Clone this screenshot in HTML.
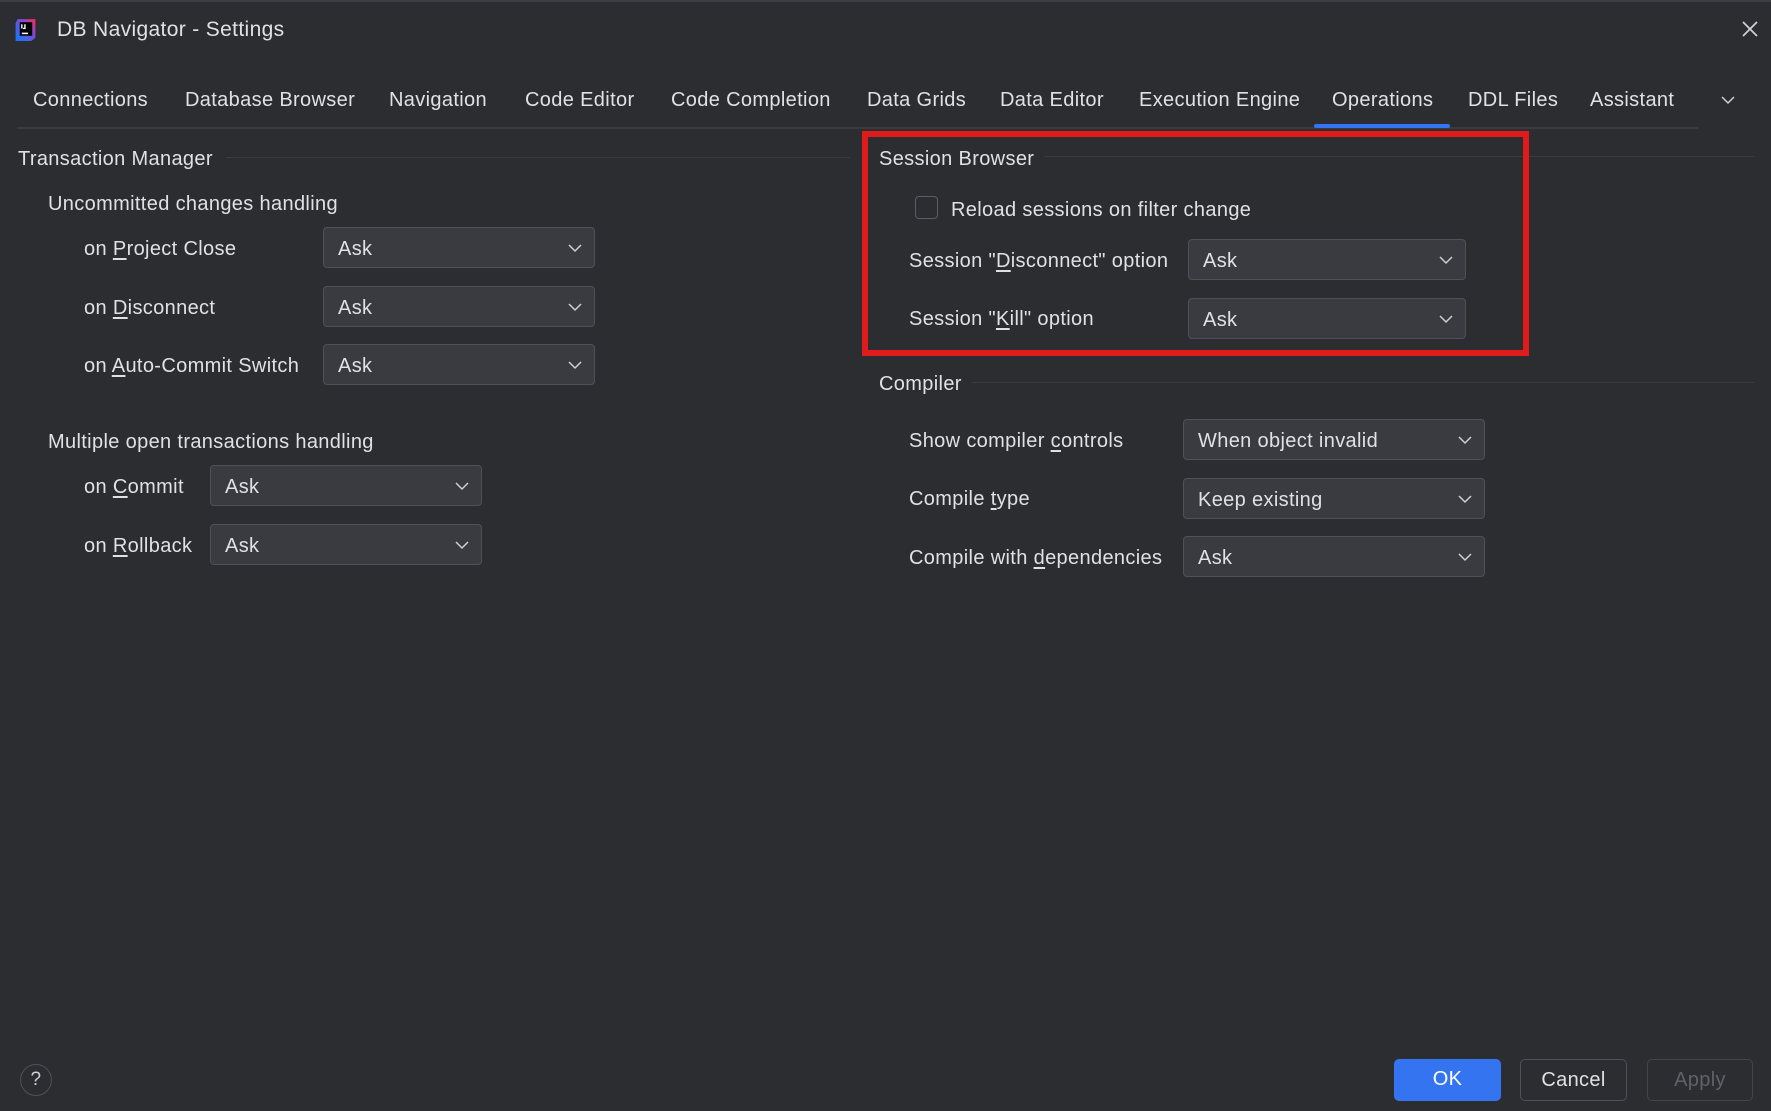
<!DOCTYPE html>
<html><head><meta charset="utf-8"><style>
*{margin:0;padding:0;box-sizing:border-box}
body{width:1771px;height:1111px;background:#2b2d30;color:#dfe1e5;font-family:"Liberation Sans",sans-serif;font-size:20px;letter-spacing:.35px;position:relative;overflow:hidden}
.a{position:absolute;white-space:nowrap;line-height:1}
.t{position:absolute;top:90px;font-size:20px;line-height:20px}
.cb{position:absolute;height:41px;background:#393b40;border:1px solid #4e5157;border-radius:4px}
.cb span{position:absolute;left:14px;top:11px;font-size:20px;line-height:20px}
.cb svg{position:absolute;right:12px;top:15px}
.hl{position:absolute;height:1px;background:#393b40}
u{text-decoration:underline;text-underline-offset:3px}
.btn{position:absolute;top:1059px;height:42px;border-radius:5px;text-align:center;line-height:41px;font-size:20px}
</style></head><body>
<div style="position:absolute;left:0;top:0;width:1771px;height:2px;background:#3c3f44"></div>
<svg class="a" style="left:14px;top:17px" width="24" height="25" viewBox="0 0 22 24"><defs><linearGradient id="g" x1="0" y1="1" x2="1" y2="0"><stop offset="0" stop-color="#087cfa"/><stop offset=".6" stop-color="#7b4bd8"/><stop offset="1" stop-color="#fe2857"/></linearGradient></defs><path d="M3 2h17v18l-4 3H1V6z" fill="url(#g)"/><rect x="5" y="5" width="12" height="13" fill="#000"/><rect x="7" y="15" width="6" height="1.5" fill="#fff"/><path d="M7 7v4M10 7v4h-2" stroke="#fff" stroke-width="1.3" fill="none"/></svg>
<div class="a" style="left:57px;top:19px;font-size:21px">DB Navigator - Settings</div>
<svg class="a" style="left:1741px;top:20px" width="18" height="18"><path d="M2 2L16 16M16 2L2 16" stroke="#ced0d6" stroke-width="1.8"/></svg>

<div class="t" style="left:33px">Connections</div>
<div class="t" style="left:185px">Database Browser</div>
<div class="t" style="left:389px">Navigation</div>
<div class="t" style="left:525px">Code Editor</div>
<div class="t" style="left:671px">Code Completion</div>
<div class="t" style="left:867px">Data Grids</div>
<div class="t" style="left:1000px">Data Editor</div>
<div class="t" style="left:1139px">Execution Engine</div>
<div class="t" style="left:1332px">Operations</div>
<div class="t" style="left:1468px">DDL Files</div>
<div class="t" style="left:1590px">Assistant</div>
<svg class="a" style="left:1721px;top:95px" width="14" height="10"><path d="M1 2l6 6 6-6" stroke="#ced0d6" stroke-width="1.5" fill="none"/></svg>
<div class="hl" style="left:17px;top:127px;width:1681px;height:2px"></div>
<div style="position:absolute;left:1314px;top:124px;width:136px;height:4px;background:#3574f0;border-radius:2px"></div>

<div class="a" style="left:18px;top:149px">Transaction Manager</div>
<div class="hl" style="left:226px;top:157px;width:624px"></div>
<div class="a" style="left:48px;top:194px">Uncommitted changes handling</div>
<div class="a" style="left:84px;top:239px">on <u>P</u>roject Close</div>
<div class="a" style="left:84px;top:298px">on <u>D</u>isconnect</div>
<div class="a" style="left:84px;top:356px">on <u>A</u>uto-Commit Switch</div>
<div class="cb" style="left:323px;top:227px;width:272px"><span>Ask</span><svg width="14" height="10"><path d="M1 2l6 6 6-6" stroke="#ced0d6" stroke-width="1.5" fill="none"/></svg></div>
<div class="cb" style="left:323px;top:286px;width:272px"><span>Ask</span><svg width="14" height="10"><path d="M1 2l6 6 6-6" stroke="#ced0d6" stroke-width="1.5" fill="none"/></svg></div>
<div class="cb" style="left:323px;top:344px;width:272px"><span>Ask</span><svg width="14" height="10"><path d="M1 2l6 6 6-6" stroke="#ced0d6" stroke-width="1.5" fill="none"/></svg></div>
<div class="a" style="left:48px;top:432px">Multiple open transactions handling</div>
<div class="a" style="left:84px;top:477px">on <u>C</u>ommit</div>
<div class="a" style="left:84px;top:536px">on <u>R</u>ollback</div>
<div class="cb" style="left:210px;top:465px;width:272px"><span>Ask</span><svg width="14" height="10"><path d="M1 2l6 6 6-6" stroke="#ced0d6" stroke-width="1.5" fill="none"/></svg></div>
<div class="cb" style="left:210px;top:524px;width:272px"><span>Ask</span><svg width="14" height="10"><path d="M1 2l6 6 6-6" stroke="#ced0d6" stroke-width="1.5" fill="none"/></svg></div>

<div class="a" style="left:879px;top:149px">Session Browser</div>
<div class="hl" style="left:1044px;top:156px;width:710px"></div>
<div style="position:absolute;left:915px;top:196px;width:23px;height:23px;border:1.5px solid #5a5d63;border-radius:4px"></div>
<div class="a" style="left:951px;top:200px">Reload sessions on filter change</div>
<div class="a" style="left:909px;top:251px">Session "<u>D</u>isconnect" option</div>
<div class="a" style="left:909px;top:309px">Session "<u>K</u>ill" option</div>
<div class="cb" style="left:1188px;top:239px;width:278px"><span>Ask</span><svg width="14" height="10"><path d="M1 2l6 6 6-6" stroke="#ced0d6" stroke-width="1.5" fill="none"/></svg></div>
<div class="cb" style="left:1188px;top:298px;width:278px"><span>Ask</span><svg width="14" height="10"><path d="M1 2l6 6 6-6" stroke="#ced0d6" stroke-width="1.5" fill="none"/></svg></div>
<div style="position:absolute;left:862px;top:131px;width:667px;height:225px;border:6px solid #e01b1b"></div>

<div class="a" style="left:879px;top:374px">Compiler</div>
<div class="hl" style="left:972px;top:382px;width:782px"></div>
<div class="a" style="left:909px;top:431px">Show compiler <u>c</u>ontrols</div>
<div class="a" style="left:909px;top:489px">Compile <u>t</u>ype</div>
<div class="a" style="left:909px;top:548px">Compile with <u>d</u>ependencies</div>
<div class="cb" style="left:1183px;top:419px;width:302px"><span>When object invalid</span><svg width="14" height="10"><path d="M1 2l6 6 6-6" stroke="#ced0d6" stroke-width="1.5" fill="none"/></svg></div>
<div class="cb" style="left:1183px;top:478px;width:302px"><span>Keep existing</span><svg width="14" height="10"><path d="M1 2l6 6 6-6" stroke="#ced0d6" stroke-width="1.5" fill="none"/></svg></div>
<div class="cb" style="left:1183px;top:536px;width:302px"><span>Ask</span><svg width="14" height="10"><path d="M1 2l6 6 6-6" stroke="#ced0d6" stroke-width="1.5" fill="none"/></svg></div>

<div style="position:absolute;left:20px;top:1064px;width:32px;height:32px;border:1.5px solid #4e5157;border-radius:50%;text-align:center;line-height:29px;font-size:19px;color:#ced0d6">?</div>
<div class="btn" style="left:1394px;width:107px;background:#3574f0;color:#fff">OK</div>
<div class="btn" style="left:1520px;width:107px;border:1.5px solid #4e5157">Cancel</div>
<div class="btn" style="left:1647px;width:106px;border:1.5px solid #43454a;color:#5f6268">Apply</div>
</body></html>
